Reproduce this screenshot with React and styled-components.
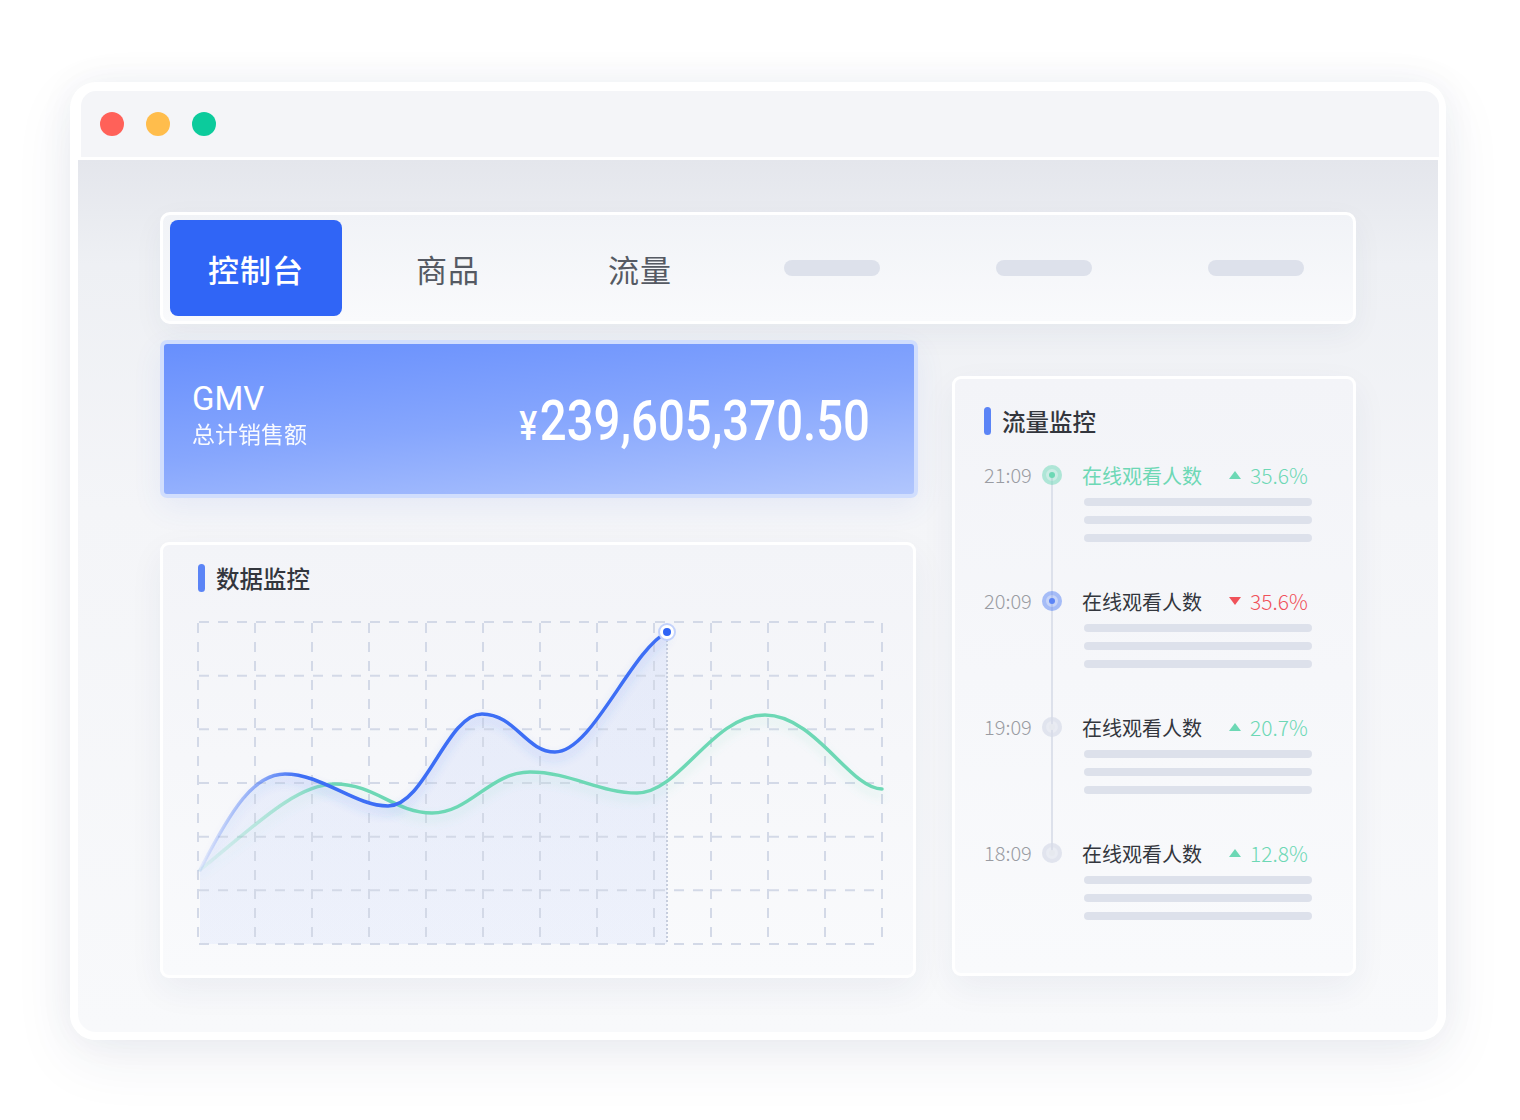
import React from "react";
import styled, { createGlobalStyle } from "styled-components";

const GlobalStyle = createGlobalStyle`
  html, body {
    margin: 0;
    padding: 0;
    background: #ffffff;
  }
  body {
    font-family: "Noto Sans CJK SC", "Noto Sans", sans-serif;
  }
`;

const Page = styled.div`
  width: 1520px;
  height: 1120px;
  padding: 82px 0 0 70px;
  box-sizing: border-box;
`;

const Window = styled.div`
  width: 1376px;
  box-sizing: border-box;
  padding: 6px 8px 8px;
  border-radius: 26px;
  background: linear-gradient(180deg, rgba(255, 255, 255, 0) 0%, rgba(255, 255, 255, 0.7) 40%, #ffffff 100%);
  box-shadow: 0 18px 60px rgba(40, 52, 96, 0.08), 0 0 36px rgba(40, 52, 96, 0.05);
`;

const TitleBar = styled.div`
  height: 66px;
  display: flex;
  align-items: center;
  gap: 22px;
  padding-left: 19px;
  margin-right: -4px;
  background: #f4f5f8;
  border: 3px solid #ffffff;
  border-radius: 18px 18px 0 0;
`;

const Light = styled.span`
  width: 24px;
  height: 24px;
  border-radius: 50%;
  background: ${(p) => p.color};
`;

const Body = styled.div`
  height: 872px;
  box-sizing: border-box;
  padding: 52px 82px 0;
  border-radius: 0 0 18px 18px;
  background: linear-gradient(180deg, #e4e6ec 0%, #eef0f4 12%, #f4f5f8 40%, #f8f9fb 100%);
`;

const Tabs = styled.div`
  height: 112px;
  box-sizing: border-box;
  display: flex;
  align-items: center;
  padding-left: 7px;
  border: 3px solid #ffffff;
  border-radius: 10px;
  background: linear-gradient(180deg, #f1f3f7 0%, #f9fafc 100%);
  box-shadow: 0 10px 30px rgba(40, 52, 96, 0.05);
`;

const Tab = styled.div`
  flex: 0 0 ${(p) => p.w}px;
  height: 96px;
  display: flex;
  align-items: center;
  justify-content: center;
  border-radius: 8px;
  font-size: 31px;
  font-weight: ${(p) => (p.active ? 500 : 400)};
  color: ${(p) => (p.active ? "#ffffff" : "#555a63")};
  background: ${(p) => (p.active ? "#3065f6" : "transparent")};
  letter-spacing: 1px;
`;

const Placeholder = styled.span`
  width: 96px;
  height: 16px;
  border-radius: 8px;
  background: #dde1eb;
`;

const Main = styled.div`
  display: flex;
  gap: 34px;
  margin-top: 16px;
`;

const LeftCol = styled.div`
  width: 758px;
  display: flex;
  flex-direction: column;
  gap: 44px;
`;

const Gmv = styled.div`
  height: 158px;
  box-sizing: border-box;
  border: 4px solid #d1defd;
  border-radius: 7px;
  padding: 0 44px 0 28px;
  display: flex;
  align-items: center;
  justify-content: space-between;
  color: #ffffff;
  background: linear-gradient(174deg, #678ffd 0%, #86a6fd 50%, #b1c6fd 100%);
  box-shadow: 0 10px 30px rgba(60, 100, 220, 0.08);
`;

const GmvLabel = styled.div`
  display: flex;
  flex-direction: column;
  margin-top: -10px;
`;

const GmvTitle = styled.div`
  font-family: Roboto, "Liberation Sans", sans-serif;
  font-size: 33px;
  line-height: 38px;
`;

const GmvSub = styled.div`
  font-size: 23px;
  line-height: 30px;
  opacity: 0.95;
`;

const Amount = styled.div`
  font-family: Roboto, "Liberation Sans", sans-serif;
  font-weight: 500;
  font-size: 56px;
  line-height: 60px;
  transform: translateY(5px) scaleX(0.845);
  transform-origin: right center;
  white-space: nowrap;
`;

const Yen = styled.span`
  font-size: 40px;
  margin-right: 3px;
`;

const Card = styled.div`
  box-sizing: border-box;
  border: 3px solid #ffffff;
  border-radius: 9px;
  background: linear-gradient(180deg, #f3f4f8 0%, #f9fafc 100%);
  box-shadow: 0 12px 34px rgba(40, 52, 96, 0.06);
`;

const ChartCard = styled(Card)`
  width: 756px;
  height: 436px;
  padding: 19px 0 0 27px;
`;

const TrafficCard = styled(Card)`
  width: 404px;
  height: 600px;
  margin-top: 36px;
  padding: 28px 0 0 29px;
`;

const CardTitle = styled.div`
  display: flex;
  align-items: center;
  gap: 11px;
  height: 28px;
  margin-left: ${(p) => p.offset || 0}px;
  font-size: 23.5px;
  font-weight: 500;
  color: #33363d;
  &::before {
    content: "";
    width: 7px;
    height: 28px;
    border-radius: 4px;
    background: #5b84f6;
  }
`;

const ChartSvg = styled.svg`
  display: block;
  margin-top: 20px;
`;

const Timeline = styled.div`
  position: relative;
  margin-top: 28px;
  &::before {
    content: "";
    position: absolute;
    left: 67px;
    top: 12px;
    width: 2px;
    height: 378px;
    background: #dde1eb;
  }
`;

const Row = styled.div`
  position: relative;
  display: flex;
  align-items: flex-start;
  height: 126px;
`;

const Time = styled.div`
  width: 58px;
  height: 24px;
  line-height: 24px;
  font-size: 20px;
  font-weight: 300;
  color: #9a9ca3;
`;

const Dot = styled.div`
  flex: 0 0 20px;
  height: 20px;
  margin-top: 2px;
  border-radius: 50%;
  display: flex;
  align-items: center;
  justify-content: center;
  background: ${(p) => p.halo};
  box-shadow: inset 0 0 0 4px ${(p) => p.halo};
  &::after {
    content: "";
    width: 6px;
    height: 6px;
    border-radius: 50%;
    background: ${(p) => p.core};
  }
`;

const Content = styled.div`
  margin-left: 22px;
  width: 228px;
`;

const Head = styled.div`
  display: flex;
  align-items: center;
  height: 24px;
  margin-left: -2px;
  font-size: 20px;
  color: ${(p) => p.color};
`;

const Trend = styled.span`
  display: flex;
  align-items: center;
  margin-left: 27px;
  color: ${(p) => p.color};
  font-weight: 300;
  font-size: 21px;
  &::before {
    content: "";
    width: 0;
    height: 0;
    margin-right: 9px;
    border-left: 6px solid transparent;
    border-right: 6px solid transparent;
    ${(p) =>
      p.up
        ? `border-bottom: 8px solid ${p.color};`
        : `border-top: 8px solid ${p.color};`}
  }
`;

const Bars = styled.div`
  display: flex;
  flex-direction: column;
  gap: 10px;
  margin-top: 11px;
`;

const Bar = styled.span`
  height: 8px;
  border-radius: 4px;
  background: #dde1eb;
`;

const GREEN = "#6dd8b5";
const RED = "#f0525a";

const rows = [
  { time: "21:09", halo: "rgba(109,216,181,0.3)", core: "#6dd8b5", label: GREEN, up: true, pct: "35.6%", pc: GREEN },
  { time: "20:09", halo: "rgba(91,132,246,0.3)", core: "#5b84f6", label: "#33363d", up: false, pct: "35.6%", pc: RED },
  { time: "19:09", halo: "rgba(214,219,232,0.45)", core: "#e6e9ef", label: "#33363d", up: true, pct: "20.7%", pc: GREEN },
  { time: "18:09", halo: "rgba(214,219,232,0.45)", core: "#e6e9ef", label: "#33363d", up: true, pct: "12.8%", pc: GREEN },
];

const bluePath =
  "M200,870 C232,808 254,774 285,774 C322,774 355,806 388,806 C425,806 447,714 482,714 C515,714 526,752 555,752 C592,752 630,652 667,632";
const greenPath =
  "M200,870 C250,830 295,784 335,784 C375,784 395,813 432,813 C470,813 490,772 530,772 C570,772 600,793 637,793 C680,793 712,715 765,715 C815,715 850,789 882,789";

function Chart() {
  const cols = Array.from({ length: 13 }, (_, i) => 198 + 57 * i);
  const rowsY = Array.from({ length: 7 }, (_, i) => 622 + (322 / 6) * i);
  return (
    <ChartSvg width="700" height="340" viewBox="0 0 700 340">
      <defs>
        <linearGradient id="fillArea" x1="0" y1="0" x2="0" y2="1">
          <stop offset="0" stopColor="#5b84f6" stopOpacity="0.1" />
          <stop offset="1" stopColor="#5b84f6" stopOpacity="0.07" />
        </linearGradient>
        <linearGradient id="fadeBlue" gradientUnits="userSpaceOnUse" x1="200" y1="0" x2="300" y2="0">
          <stop offset="0" stopColor="#3d6ef5" stopOpacity="0.1" />
          <stop offset="0.6" stopColor="#3d6ef5" stopOpacity="0.55" />
          <stop offset="1" stopColor="#3d6ef5" stopOpacity="1" />
        </linearGradient>
        <linearGradient id="fadeGreen" gradientUnits="userSpaceOnUse" x1="200" y1="0" x2="340" y2="0">
          <stop offset="0" stopColor="#6dd8b5" stopOpacity="0.1" />
          <stop offset="0.6" stopColor="#6dd8b5" stopOpacity="0.55" />
          <stop offset="1" stopColor="#6dd8b5" stopOpacity="1" />
        </linearGradient>
        <filter id="glow" x="-10%" y="-20%" width="120%" height="140%">
          <feGaussianBlur in="SourceGraphic" stdDeviation="5" result="b" />
          <feColorMatrix in="b" type="matrix" values="1 0 0 0 0 0 1 0 0 0 0 0 1 0 0 0 0 0 0.25 0" />
          <feOffset dy="6" />
          <feMerge>
            <feMergeNode />
            <feMergeNode in="SourceGraphic" />
          </feMerge>
        </filter>
      </defs>
      <g transform="translate(-190,-612)">
        <path d={`${bluePath} L667,944 L200,944 Z`} fill="url(#fillArea)" />
        {cols.map((x) => (
          <line key={"c" + x} x1={x} y1={622} x2={x} y2={944} stroke="#d3d9e7" strokeWidth="2" strokeDasharray="10 9" strokeDashoffset="-1" />
        ))}
        {rowsY.map((y) => (
          <line key={"r" + y} x1={198} y1={y} x2={882} y2={y} stroke="#d3d9e7" strokeWidth="2" strokeDasharray="10 9" strokeDashoffset="-1" />
        ))}
        <line x1="667" y1="636" x2="667" y2="944" stroke="#c6cddd" strokeWidth="2" strokeDasharray="2 2" />
        <path d={greenPath} fill="none" stroke="url(#fadeGreen)" strokeWidth="3.5" strokeLinecap="round" filter="url(#glow)" />
        <path d={bluePath} fill="none" stroke="url(#fadeBlue)" strokeWidth="3.5" strokeLinecap="round" filter="url(#glow)" />
        <circle cx="667" cy="632" r="8" fill="#ffffff" stroke="#c3d2fb" strokeWidth="2" />
        <circle cx="667" cy="632" r="4" fill="#2f64f5" />
      </g>
    </ChartSvg>
  );
}

export default function App() {
  return (
    <Page>
      <GlobalStyle />
      <Window>
        <TitleBar>
          <Light color="#ff6159" />
          <Light color="#ffbd4c" />
          <Light color="#0ccb9c" />
        </TitleBar>
        <Body>
          <Tabs>
            <Tab w={172} active>
              控制台
            </Tab>
            <Tab w={212}>商品</Tab>
            <Tab w={172}>流量</Tab>
            <Tab w={212}>
              <Placeholder />
            </Tab>
            <Tab w={212}>
              <Placeholder />
            </Tab>
            <Tab w={212}>
              <Placeholder />
            </Tab>
          </Tabs>
          <Main>
            <LeftCol>
              <Gmv>
                <GmvLabel>
                  <GmvTitle>GMV</GmvTitle>
                  <GmvSub>总计销售额</GmvSub>
                </GmvLabel>
                <Amount>
                  <Yen>¥</Yen>239,605,370.50
                </Amount>
              </Gmv>
              <ChartCard>
                <CardTitle offset={8}>数据监控</CardTitle>
                <Chart />
              </ChartCard>
            </LeftCol>
            <TrafficCard>
              <CardTitle>流量监控</CardTitle>
              <Timeline>
                {rows.map((r) => (
                  <Row key={r.time}>
                    <Time>{r.time}</Time>
                    <Dot halo={r.halo} core={r.core} />
                    <Content>
                      <Head color={r.label}>
                        在线观看人数
                        <Trend up={r.up} color={r.pc}>
                          {r.pct}
                        </Trend>
                      </Head>
                      <Bars>
                        <Bar />
                        <Bar />
                        <Bar />
                      </Bars>
                    </Content>
                  </Row>
                ))}
              </Timeline>
            </TrafficCard>
          </Main>
        </Body>
      </Window>
    </Page>
  );
}
